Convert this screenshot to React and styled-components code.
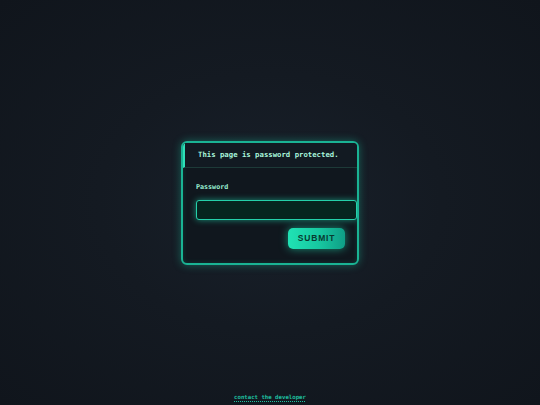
import React from 'react';
import styled, { createGlobalStyle } from 'styled-components';

const Global = createGlobalStyle`
  html, body { margin: 0; padding: 0; height: 100%; }
  body {
    background: radial-gradient(ellipse at 50% 50%, #18202a 0%, #141a22 45%, #10151c 100%);
    font-family: "DejaVu Sans Mono", monospace;
  }
  #root { height: 100%; }
`;

const Page = styled.div`
  height: 405px;
  display: flex;
  flex-direction: column;
`;

const Main = styled.div`
  flex: 1;
  display: flex;
  align-items: center;
  justify-content: center;
  padding-top: 21px;
`;

const Card = styled.div`
  width: 178px;
  box-sizing: border-box;
  background: #10171e;
  border: 2px solid #1ab394;
  border-radius: 6px;
  box-shadow: 0 0 9px rgba(28, 210, 170, 0.4), inset 0 0 5px rgba(28, 210, 170, 0.18);
  overflow: hidden;
`;

const Header = styled.div`
  height: 24px;
  display: flex;
  align-items: center;
  padding-left: 13px;
  border-left: 2.5px solid #2ee0b8;
  border-bottom: 1px solid #1d3a38;
  color: #a8f5dc;
  font-size: 7.3px;
  font-weight: bold;
  background: #121a22;
`;

const Body = styled.div`
  padding: 15px 0 14px 13px;
  display: flex;
  flex-direction: column;
`;

const Label = styled.label`
  color: #9af0d4;
  font-size: 6.7px;
  font-weight: bold;
  margin-bottom: 9px;
`;

const Input = styled.input`
  box-sizing: border-box;
  width: 161px;
  height: 20px;
  background: #06251f;
  border: 1.5px solid #25d0aa;
  border-radius: 3px;
  box-shadow: 0 0 6px rgba(34, 220, 175, 0.6);
  outline: none;
  color: #9ff5dc;
`;

const Actions = styled.div`
  display: flex;
  justify-content: flex-end;
  padding-right: 12px;
  margin-top: 8px;
`;

const Button = styled.button`
  width: 57px;
  height: 21px;
  border: none;
  border-radius: 5px;
  background: linear-gradient(90deg, #20e2b4 0%, #17c7a0 55%, #0f9e86 100%);
  box-shadow: 0 0 9px rgba(30, 220, 175, 0.6);
  color: #083a30;
  font-family: "Liberation Sans", Arial, sans-serif;
  font-weight: bold;
  font-size: 8.5px;
  letter-spacing: 0.8px;
  cursor: pointer;
`;

const Footer = styled.div`
  text-align: center;
  padding-bottom: 2px;
`;

const Link = styled.a`
  color: #1fc0a0;
  font-size: 5.7px;
  font-weight: bold;
  text-decoration: underline dotted;
  text-underline-offset: 1.5px;
`;

export default function App() {
  return (
    <Page>
      <Global />
      <Main>
        <Card>
          <Header>This page is password protected.</Header>
          <Body>
            <Label>Password</Label>
            <Input type="password" />
            <Actions>
              <Button>SUBMIT</Button>
            </Actions>
          </Body>
        </Card>
      </Main>
      <Footer>
        <Link>contact the developer</Link>
      </Footer>
    </Page>
  );
}
